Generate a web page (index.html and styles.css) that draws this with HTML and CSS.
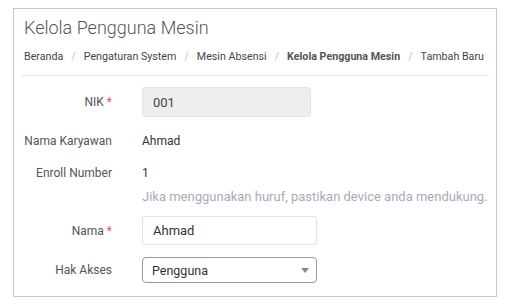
FILE: index.html
```html
<!DOCTYPE html>
<html lang="id">
<head>
  <meta charset="UTF-8" />
  <title>Kelola Pengguna Mesin</title>
  <link rel="stylesheet" href="styles.css">
</head>
<body>

  <div class="card">
    <div class="card-header">
      <h1>Kelola Pengguna Mesin</h1>
      <div class="breadcrumb"><span>Beranda</span><span class="sep">/</span><span>Pengaturan System</span><span class="sep">/</span><span>Mesin Absensi</span><span class="sep">/</span><span class="active">Kelola Pengguna Mesin</span><span class="sep">/</span><span>Tambah Baru</span></div>
    </div>

    <!-- FORM -->
    <div class="form">
      <div class="row row-nik">
        <label>NIK <span class="req">*</span></label>
        <input type="text" class="input input-nik" value="001" disabled>
      </div>

      <div class="row row-text">
        <label>Nama Karyawan</label>
        <div class="value">Ahmad</div>
      </div>

      <div class="row row-text row-enroll">
        <label>Enroll Number</label>
        <div class="value">1</div>
      </div>
      <div class="row help-row">
        <label></label>
        <div class="help">Jika menggunakan huruf, pastikan device anda mendukung.</div>
      </div>

      <div class="row row-nama">
        <label>Nama <span class="req">*</span></label>
        <input type="text" class="input input-nama" value="Ahmad">
      </div>

      <div class="row row-akses">
        <label>Hak Akses</label>
        <div class="select">
          <span>Pengguna</span>
          <span class="caret"></span>
        </div>
      </div>
    </div>
  </div>

</body>
</html>
```

FILE: styles.css
```css
body {
  margin: 0;
  padding: 8px 19px 0 13px;
  font-family: Roboto, "Liberation Sans", Arial, sans-serif;
  background: #fff;
  color: #333;
}

.card {
  border: 1px solid #c8c8c8;
  padding: 0 7px 13px 7px;
}

.card-header {
  padding: 7px 0 10px 0;
  border-bottom: 1px solid #e4e4e4;
}

h1 {
  margin: 0 0 9px 3px;
  font-size: 18px;
  font-weight: 300;
  line-height: 24px;
  color: #555;
}

.breadcrumb {
  margin-left: 3px;
  font-size: 10.7px;
  line-height: 16px;
  color: #444;
  white-space: nowrap;
}

.breadcrumb .sep {
  color: #c4c4c4;
  padding: 0 8px;
}

.breadcrumb .active {
  font-weight: bold;
  color: #555;
}

.form {
  padding-top: 11px;
}

.row {
  display: flex;
  align-items: center;
}

.row label {
  width: 91px;
  flex: none;
  text-align: right;
  margin-right: 30px;
  font-size: 12px;
  color: #555;
  white-space: nowrap;
}

.req {
  color: #f0545c;
}

.input {
  box-sizing: border-box;
  font-family: inherit;
  font-size: 13px;
  color: #333;
  border: 1px solid #e2e2e2;
  border-radius: 3px;
  padding: 0 10px;
  background: #fff;
}

.input-nik {
  width: 169px;
  height: 30px;
  background: #eee;
  color: #444;
}

.input-nama {
  width: 175px;
  height: 29px;
}

.row-nik {
  margin-bottom: 14px;
}

.row-text {
  height: 20px;
  margin-bottom: 12px;
}

.row-enroll {
  margin-bottom: 4px;
}

.value {
  font-size: 12px;
  color: #333;
}

.help-row {
  height: 18px;
  margin-bottom: 11px;
}

.help {
  font-size: 13px;
  color: #aab;
  white-space: nowrap;
}

.row-nama {
  margin-bottom: 12px;
}

.select {
  box-sizing: border-box;
  width: 175px;
  height: 26px;
  border: 1px solid #999;
  border-radius: 4px;
  display: flex;
  align-items: center;
  justify-content: space-between;
  padding: 0 7px 0 9px;
  font-size: 12.5px;
  color: #333;
}

.caret {
  width: 0;
  height: 0;
  border-left: 4px solid transparent;
  border-right: 4px solid transparent;
  border-top: 5px solid #888;
}
```
